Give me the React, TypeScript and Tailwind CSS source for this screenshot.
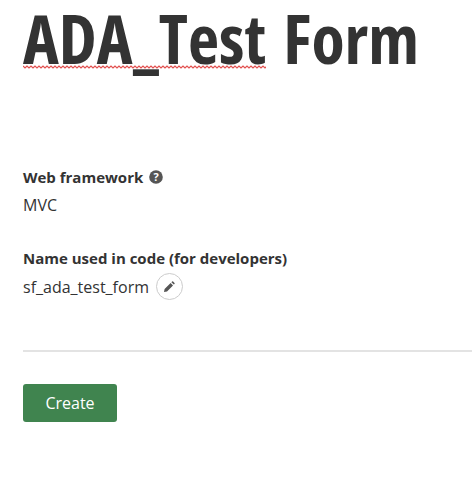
const squiggle = "M0 1" + " l2 2 l2 -2".repeat(61);

export default function App() {
  return (
    <div className="w-[472px] h-[487px] overflow-hidden bg-white pl-[23px] font-['Open_Sans',sans-serif] text-[#333]">
      <h1 className="relative h-[85px] text-[68px] leading-[76px] font-bold whitespace-nowrap [font-stretch:75%] [word-spacing:5px]">
        ADA<span className="inline-block origin-left scale-x-[0.8] mr-[-6px]">_</span>Test Form
        <svg className="absolute left-0 top-[65px]" width="243" height="4" viewBox="0 0 243 4">
          <path d={squiggle} fill="none" stroke="#e2504f" strokeWidth="1.2" />
        </svg>
      </h1>

      <div className="mt-[80px]">
        <div className="flex items-center gap-[6px] h-6 text-[15px] font-bold">
          Web framework
          <svg width="14" height="14" viewBox="0 0 14 14">
            <circle cx="7" cy="7" r="6.8" fill="#555" />
            <text x="7" y="10.8" textAnchor="middle" fontSize="11" fontWeight="700" fill="#fff" fontFamily="Open Sans, sans-serif">?</text>
          </svg>
        </div>
        <div className="mt-[4px] h-6 text-[16px] leading-6">MVC</div>
      </div>

      <div className="mt-[29px]">
        <div className="h-6 text-[15px] leading-6 font-bold whitespace-nowrap">Name used in code (for developers)</div>
        <div className="mt-[3px] flex items-center gap-[7px] text-[16px] leading-6">
          sf_ada_test_form
          <span className="flex h-[27px] w-[27px] items-center justify-center rounded-full border border-[#ccc] bg-white">
            <svg width="12" height="12" viewBox="0 0 12 12" fill="#555">
              <path d="M1 11 l0.6 -3 l6 -6 l2.4 2.4 l-6 6 z M8.4 1.2 l0.7 -0.7 q0.5 -0.4 1 0 l1.4 1.4 q0.4 0.5 0 1 l-0.7 0.7 z" />
            </svg>
          </span>
        </div>
      </div>

      <div className="mt-[50px] h-[2px] bg-[#e3e3e3]" />

      <button className="mt-[32px] h-[38px] w-[94px] rounded-[3px] bg-[#40844f] text-[16px] text-white">Create</button>
    </div>
  );
}
